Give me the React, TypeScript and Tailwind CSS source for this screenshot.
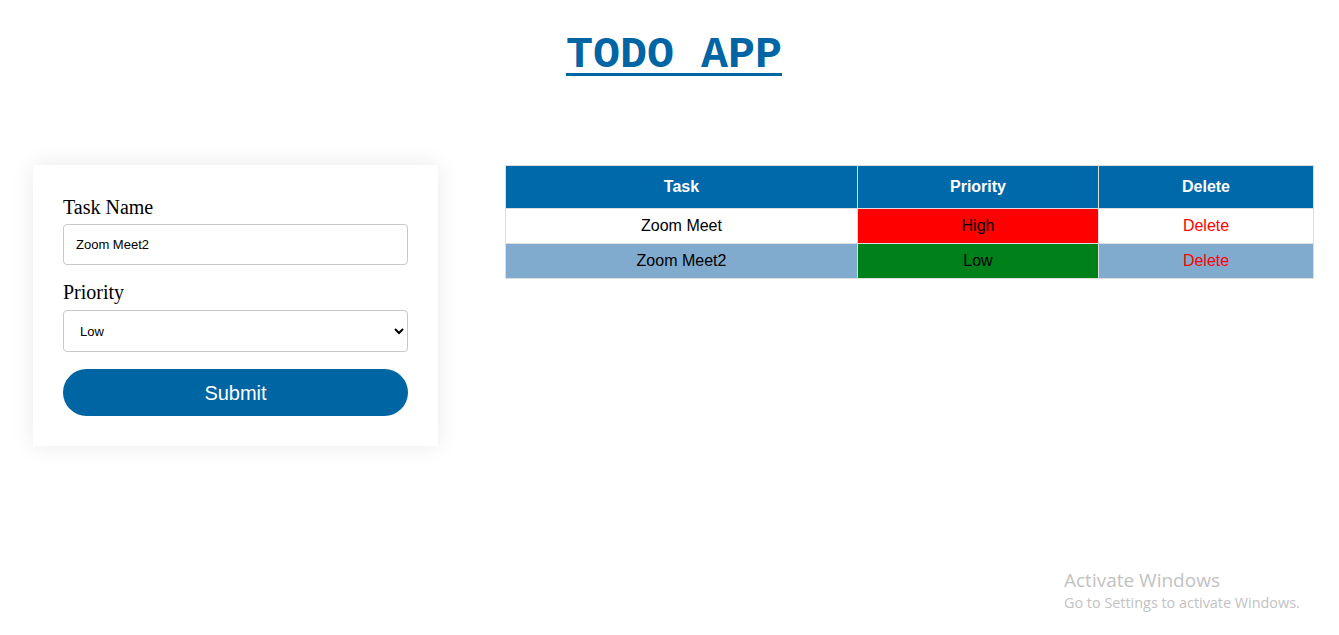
import { useState } from "react";

type Task = { id: number; name: string; priority: string };

export default function App() {
  const [name, setName] = useState("Zoom Meet2");
  const [priority, setPriority] = useState("Low");
  const [tasks, setTasks] = useState<Task[]>([
    { id: 1, name: "Zoom Meet", priority: "High" },
    { id: 2, name: "Zoom Meet2", priority: "Low" },
  ]);

  const submitHandler = (e: React.FormEvent) => {
    e.preventDefault();
    if (!name) return;
    setTasks([...tasks, { id: Date.now(), name, priority }]);
  };

  const deleteHandler = (id: number) => {
    setTasks(tasks.filter((t) => t.id !== id));
  };

  return (
    <div className="relative min-h-[635px] bg-white font-['Liberation_Sans',Arial,sans-serif]">
      <h1 className="pl-[9px] pt-[26px] text-center font-['Liberation_Mono',monospace] text-[45px] font-bold leading-[60px] text-[#0065a5] underline decoration-[3px] underline-offset-[6px]">
        TODO APP
      </h1>

      <div className="mt-[79px] flex items-start justify-between pl-[33px] pr-[25px]">
        <form
          onSubmit={submitHandler}
          className="w-[405px] bg-white px-[30px] pt-[30px] pb-[30px] shadow-[0_0_22px_rgba(0,0,0,0.09)]"
        >
          <label className="block font-['Liberation_Serif',serif] text-[20px] leading-[24px] text-black">
            Task Name
          </label>
          <input
            value={name}
            onChange={(e) => setName(e.target.value)}
            className="mt-[5px] h-[41px] w-full rounded-[4px] border border-[#c8c8c8] px-[12px] text-[13px] text-black outline-none"
          />
          <label className="mt-[15px] block font-['Liberation_Serif',serif] text-[20px] leading-[24px] text-black">
            Priority
          </label>
          <select
            value={priority}
            onChange={(e) => setPriority(e.target.value)}
            className="mt-[6px] h-[42px] w-full rounded-[4px] border border-[#c8c8c8] bg-white px-[12px] text-[13px] text-black outline-none"
          >
            <option>High</option>
            <option>Medium</option>
            <option>Low</option>
          </select>
          <button
            type="submit"
            className="mt-[17px] h-[47px] w-full rounded-[24px] bg-[#0065a3] text-[20px] text-white"
          >
            Submit
          </button>
        </form>

        <table className="w-[809px] border-collapse text-center text-[16px]">
          <thead>
            <tr className="h-[43px] bg-[#0069aa] text-white">
              <th className="w-[352px] border border-[#dddddd] font-bold">Task</th>
              <th className="w-[241px] border border-[#dddddd] font-bold">Priority</th>
              <th className="border border-[#dddddd] font-bold">Delete</th>
            </tr>
          </thead>
          <tbody>
            {tasks.map((t, i) => (
              <tr
                key={t.id}
                className={`h-[35px] ${i % 2 === 1 ? "bg-[#81abce]" : "bg-white"}`}
              >
                <td className="border border-[#dddddd] text-black">{t.name}</td>
                <td
                  className={`border border-[#dddddd] text-black ${
                    t.priority === "High"
                      ? "bg-[#ff0000]"
                      : t.priority === "Low"
                      ? "bg-[#00801a]"
                      : "bg-[#ffd700]"
                  }`}
                >
                  {t.priority}
                </td>
                <td
                  onClick={() => deleteHandler(t.id)}
                  className="cursor-pointer border border-[#dddddd] text-[#ff0000]"
                >
                  Delete
                </td>
              </tr>
            ))}
          </tbody>
        </table>
      </div>

      <div className="absolute left-[1064px] top-[567px] font-['Open_Sans',sans-serif] text-[#c2c2c2]">
        <div className="text-[19px] leading-[26px]">Activate Windows</div>
        <div className="text-[14.4px] leading-[20px]">Go to Settings to activate Windows.</div>
      </div>
    </div>
  );
}
